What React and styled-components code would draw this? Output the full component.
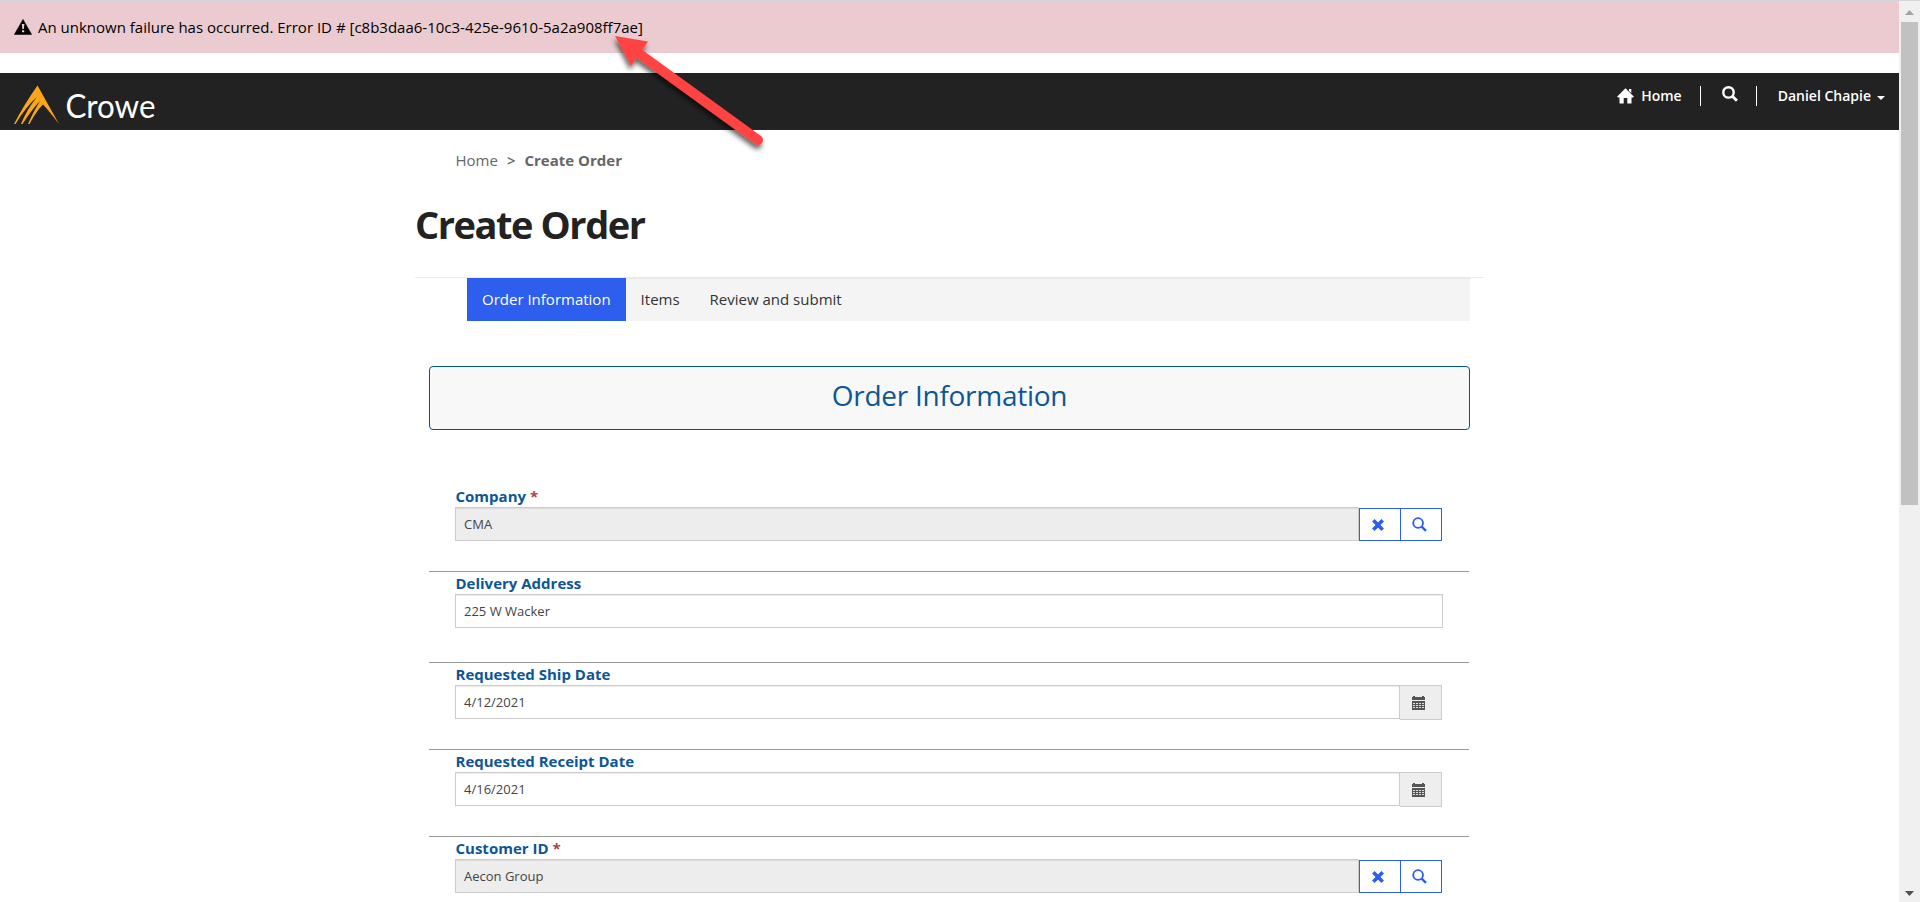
import React from "react";
import styled, { createGlobalStyle } from "styled-components";

const GlobalStyle = createGlobalStyle`
  *, *::before, *::after { box-sizing: border-box; }
  body {
    margin: 0;
    overflow: hidden;
    background: #fff;
    color: #333;
    font-family: "Open Sans", "Noto Sans", sans-serif;
    font-size: 15px;
    line-height: 20px;
  }
`;

const Frame = styled.div`
  position: relative;
  display: grid;
  grid-template-columns: 1fr 21px;
  width: 1920px;
  height: 902px;
  border-top: 1px solid #d4d8dc;
  overflow: hidden;
`;

const Page = styled.div`
  overflow: hidden;
`;

const Alert = styled.div`
  display: flex;
  align-items: center;
  gap: 6px;
  height: 52px;
  padding: 0 14px;
  margin-bottom: 20px;
  background: #ebcbd0;
  color: #000;
`;

const AlertText = styled.span`
  white-space: nowrap;
`;

const NavBar = styled.header`
  display: flex;
  justify-content: space-between;
  height: 57px;
  padding: 13px 14px 0 14px;
  background: #222;
`;

const LogoMark = styled.svg`
  overflow: visible;
`;

const NavLinks = styled.nav`
  display: flex;
  align-items: flex-start;
  color: #fff;
  font-weight: 600;
  font-size: 14px;
`;

const NavItem = styled.a`
  display: flex;
  align-items: center;
  gap: ${(p) => p.$gap || 0}px;
  height: ${(p) => p.$height || 20}px;
  padding: 0 ${(p) => p.$right}px 0 ${(p) => p.$left}px;
`;

const NavDivider = styled.span`
  width: 1px;
  height: 20px;
  background: #fff;
`;

const Caret = styled.span`
  margin-top: 3px;
  border: 4px solid transparent;
  border-top-color: #fff;
  border-bottom: 0;
`;

const Container = styled.main`
  width: 1069px;
  margin-left: 415px;
`;

const Breadcrumb = styled.div`
  display: flex;
  gap: 9px;
  padding: 20px 0 0 40.5px;
  color: #666;
`;

const Strong = styled.span`
  font-weight: ${(p) => p.$weight || 700};
`;

const PageTitle = styled.h1`
  margin: 0;
  padding: 31px 0 0 0;
  height: 108px;
  border-bottom: 1px solid #eaeaea;
  color: #222;
  font-size: 38px;
  line-height: 46px;
  font-weight: 700;
  letter-spacing: -1.45px;
`;

const Tabs = styled.div`
  display: flex;
  width: 1003px;
  height: 43px;
  margin-left: 52px;
  background: #f4f4f4;
  box-shadow: inset 0 1px 1px rgba(0, 0, 0, 0.05);
`;

const Tab = styled.div`
  padding: 11px 15px 0;
  white-space: nowrap;
  color: ${(p) => (p.$active ? "#fff" : "#333")};
  background: ${(p) => (p.$active ? "#2d5eee" : "transparent")};
`;

const SectionTitle = styled.h2`
  display: flex;
  justify-content: center;
  width: 1041px;
  height: 64px;
  margin: 45px 0 56px 14px;
  padding-top: 9px;
  border: 1px solid #00558c;
  border-radius: 4px;
  background: #f8f8f8;
  color: #0c5697;
  font-size: 28px;
  line-height: 38px;
  font-weight: 400;
  letter-spacing: -0.28px;
`;

const Field = styled.section`
  width: 1040px;
  height: ${(p) => p.$height}px;
  margin-left: 14px;
  padding: 0 27px 0 26px;
  border-bottom: 1px solid #999;
`;

const Label = styled.label`
  display: block;
  height: ${(p) => (p.$first ? 21 : 22)}px;
  padding: ${(p) => (p.$first ? 0 : 1)}px 0 0 0.5px;
  color: #0c5697;
  font-size: 15px;
  font-weight: 700;
  white-space: pre;
`;

const Required = styled.span`
  color: #a94442;
`;

const InputGroup = styled.div`
  display: flex;
  align-items: flex-start;
  width: ${(p) => (p.$full ? 988 : 987)}px;
`;

const Input = styled.div`
  flex: 1;
  height: 34px;
  padding: 6px 8px;
  border: 1px solid #ccc;
  background: ${(p) => (p.$readOnly ? "#ededed" : "#fff")};
  box-shadow: inset 0 1px 1px rgba(0, 0, 0, 0.075);
  color: #444;
  font-size: 13px;
`;

const LookupButton = styled.button`
  display: flex;
  align-items: center;
  justify-content: center;
  width: 42px;
  height: 33px;
  margin: 1px 0 0 ${(p) => (p.$joined ? -1 : 0)}px;
  padding: 0 4px 0 0;
  border: 1px solid #2d5eee;
  background: #fff;
  color: #2d5eee;
`;

const DateAddon = styled.span`
  display: flex;
  align-items: center;
  justify-content: center;
  width: 42px;
  height: 35px;
  padding: 1px 5px 0 0;
  border: 1px solid #ccc;
  border-left: 0;
  background: #eee;
  color: #555;
`;

const ScrollTrack = styled.aside`
  display: flex;
  flex-direction: column;
  align-items: center;
  justify-content: space-between;
  padding: 9px 0 6px;
  background: #f0f0f0;
`;

const ScrollThumb = styled.div`
  width: 17px;
  height: 483px;
  margin: 7px 0 auto;
  background: #c1c1c1;
`;

const Pointer = styled.svg`
  position: absolute;
  left: 600px;
  top: 19px;
  pointer-events: none;
`;

const WarningIcon = () => (
  <svg width="18" height="16" viewBox="0 0 18 16">
    <path d="M9 .4 17.6 15.4H.4Z" fill="#000" stroke="#000" strokeWidth=".6" strokeLinejoin="round" />
    <path d="M7.8 5h2.6l-.5 5H8.3ZM8 11.2h2.200v2H8Z" fill="#ebcbd0" />
  </svg>
);

const Logo = () => (
  <LogoMark width="146" height="44" viewBox="14 86 146 44">
    <path
      fill="#f9a61a"
      d="M37.500 85.500 59 124Q50 112 43 104.500Q37 110 29.500 124H28Q32.500 113 40 101Q31.500 110 22.500 124H21Q27 109 37 97Q26.500 106 15.500 124H14Q25 103 37.500 85.500Z"
    />
    <text x="65.500" y="117.500" fill="#fff" fontFamily="Lato" fontSize="33" textLength="90" lengthAdjust="spacingAndGlyphs">
      Crowe
    </text>
  </LogoMark>
);

const HomeIcon = () => (
  <svg width="17" height="16" viewBox="0 0 17 16" fill="currentColor">
    <path d="M8.500 .2 17 8.800 15.900 9.500H14.500V15.500H10.300V10H6.700V15.500H2.500V9.500H1.100L0 8.800ZM12 1h2.300v4L12 3Z" />
  </svg>
);

const SearchIcon = ({ size = 16, stroke = 2 }) => (
  <svg width={size} height={size} viewBox="0 0 16 16" fill="none" stroke="currentColor">
    <circle cx="6.500" cy="6.400" r="5.200" strokeWidth={stroke} />
    <path d="m10.400 10.300 4.500 4.400" strokeWidth={stroke + 0.6} />
  </svg>
);

const RemoveIcon = () => (
  <svg width="12" height="12" viewBox="0 0 12 12" stroke="currentColor" strokeWidth="3.600">
    <path d="m1.300 1.300 9.400 9.400M10.700 1.300l-9.400 9.400" />
  </svg>
);

const CalendarIcon = () => (
  <svg width="13" height="14" viewBox="0 0 13 14" fill="currentColor">
    <path d="M0 1h1V0h2v1h7V0h2v1h1v3H0ZM0 5h13v9H0Z" />
    <path d="M1 7.500h11M1 9.500h11M1 11.500h11" stroke="#ddd" strokeWidth="1" strokeDasharray="2 1" />
  </svg>
);

const ScrollArrow = ({ down }) => (
  <svg width="9" height="5" viewBox="0 0 9 5">
    <path d={down ? "M0 0h9L4.500 5Z" : "M0 5h9L4.500 0Z"} fill={down ? "#505050" : "#a3a3a3"} />
  </svg>
);

const fields = [
  { label: "Company", value: "CMA", kind: "lookup", height: 86, first: true },
  { label: "Delivery Address", value: "225 W Wacker", kind: "text", height: 91 },
  { label: "Requested Ship Date", value: "4/12/2021", kind: "date", height: 87 },
  { label: "Requested Receipt Date", value: "4/16/2021", kind: "date", height: 87 },
  { label: "Customer ID", value: "Aecon Group", kind: "lookup", height: 87 },
];

const FormField = ({ label, value, kind, height, first }) => (
  <Field $height={height}>
    <Label $first={first}>
      {label}
      {kind === "lookup" && <Required> *</Required>}
    </Label>
    <InputGroup $full={kind === "text"}>
      <Input $readOnly={kind === "lookup"}>{value}</Input>
      {kind === "lookup" && (
        <>
          <LookupButton aria-label="Clear"><RemoveIcon /></LookupButton>
          <LookupButton $joined aria-label="Search"><SearchIcon size={15} stroke={2} /></LookupButton>
        </>
      )}
      {kind === "date" && <DateAddon><CalendarIcon /></DateAddon>}
    </InputGroup>
  </Field>
);

export default function App() {
  return (
    <>
      <GlobalStyle />
      <Frame>
        <Page>
          <Alert>
            <WarningIcon />
            <AlertText>An unknown failure has occurred. Error ID # [c8b3daa6-10c3-425e-9610-5a2a908ff7ae]</AlertText>
          </Alert>
          <NavBar>
            <Logo />
            <NavLinks>
              <NavItem $gap={7} $left={0} $right={18}><HomeIcon />Home</NavItem>
              <NavDivider />
              <NavItem $left={21} $right={18} $height={16}><SearchIcon stroke={2.4} /></NavItem>
              <NavDivider />
              <NavItem $gap={6} $left={21} $right={0}>Daniel Chapie<Caret /></NavItem>
            </NavLinks>
          </NavBar>
          <Container>
            <Breadcrumb>
              <span>Home</span>
              <Strong $weight={600}>&gt;</Strong>
              <Strong>Create Order</Strong>
            </Breadcrumb>
            <PageTitle>Create Order</PageTitle>
            <Tabs>
              <Tab $active>Order Information</Tab>
              <Tab>Items</Tab>
              <Tab>Review and submit</Tab>
            </Tabs>
            <SectionTitle>Order Information</SectionTitle>
            {fields.map((f) => <FormField key={f.label} {...f} />)}
          </Container>
        </Page>
        <ScrollTrack>
          <ScrollArrow />
          <ScrollThumb />
          <ScrollArrow down />
        </ScrollTrack>
        <Pointer width="180" height="140" viewBox="600 20 180 140">
          <defs>
            <filter id="shadow" x="-20%" y="-20%" width="150%" height="150%">
              <feDropShadow dx="-1" dy="4" stdDeviation="2.500" floodColor="#000" floodOpacity=".6" />
            </filter>
          </defs>
          <path
            filter="url(#shadow)"
            fill="#ff4343"
            d="M615 36 648 41.500 642.500 50 761 136A5 5 0 0 1 755 144L636.500 58 631 66Z"
          />
        </Pointer>
      </Frame>
    </>
  );
}
